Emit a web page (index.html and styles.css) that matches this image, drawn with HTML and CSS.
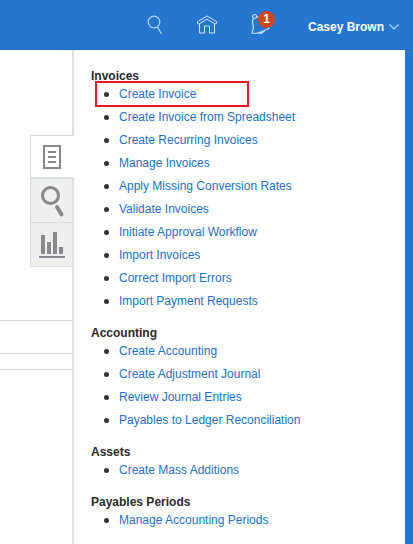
FILE: index.html
```html
<!DOCTYPE html>
<html lang="en">
<head>
<meta charset="utf-8">
<title>Invoices</title>
<link rel="stylesheet" href="styles.css">
</head>
<body>
<header class="topbar">
  <button class="icon-button" aria-label="Search">
    <svg width="22" height="22" viewBox="0 0 22 22" fill="none" stroke="#b9d8f5" stroke-width="1.200"><circle cx="11" cy="8" r="5.800"/><path d="M14.500 13l4 7"/></svg>
  </button>
  <a class="icon-button" href="#" aria-label="Home">
    <svg width="22" height="22" viewBox="0 0 22 22" fill="none" stroke="#d3e7fa"><path d="M1.500 9.500v-2L11 2l9.500 5.500v2l-1.500.5L11 5.200 3 10zM3.500 10v9h5v-7h5v7h5v-9"/></svg>
  </a>
  <button class="icon-button" aria-label="Notifications, 1 new">
    <svg width="22" height="22" viewBox="0 0 22 22" fill="none" stroke="#c4dff8" stroke-width="1.200"><circle cx="5.500" cy="2.500" r="2"/><path d="M7.500 2.500c3 2 6 0 7 3M4.500 4.500c-3 3 1 6-.5 11l-1 3.500 3 .5c5 0 8-3 14-5v-3M10 18.500l2 1 4-3z"/></svg>
    <span class="badge">1</span>
  </button>
  <button class="user-menu">Casey Brown
    <svg width="10" height="6" viewBox="0 0 10 6" fill="none" stroke="#b9d8f5" stroke-width="1.200"><path d="M.5.500L5 5 9.500.500"/></svg>
  </button>
</header>
<div class="workspace">
  <aside class="rail">
    <nav class="tabs" aria-label="Panels">
      <button class="tab active" aria-label="Tasks">
        <svg width="28" height="32" viewBox="0 0 28 32" fill="none" stroke="#858a8e" stroke-width="2"><path d="M6 6h16v22H6zM10 12h8M10 17h8M10 22h8"/></svg>
      </button>
      <button class="tab" aria-label="Search">
        <svg width="28" height="32" viewBox="0 0 28 32" fill="none" stroke="#858a8e" stroke-width="3"><circle cx="12.500" cy="12.500" r="8"/><path d="M19 24l4.500 7.500" stroke-width="4" stroke-linecap="round"/></svg>
      </button>
      <button class="tab" aria-label="Reports">
        <svg width="28" height="32" viewBox="0 0 28 32" fill="#858a8e"><path d="M3 8h4v19H3zM9 15h4v12H9zM15 5h4v22h-4zM21 20h4v7h-4zM1 29h26v2H1z"/></svg>
      </button>
    </nav>
    <div class="rule rule-large"></div>
    <div class="rule rule-medium"></div>
    <div class="rule rule-small"></div>
  </aside>
  <main class="tasks">
    <section>
      <h2>Invoices</h2>
      <ul>
        <li class="highlight"><a href="#">Create Invoice</a></li>
        <li><a href="#">Create Invoice from Spreadsheet</a></li>
        <li><a href="#">Create Recurring Invoices</a></li>
        <li><a href="#">Manage Invoices</a></li>
        <li><a href="#">Apply Missing Conversion Rates</a></li>
        <li><a href="#">Validate Invoices</a></li>
        <li><a href="#">Initiate Approval Workflow</a></li>
        <li><a href="#">Import Invoices</a></li>
        <li><a href="#">Correct Import Errors</a></li>
        <li><a href="#">Import Payment Requests</a></li>
      </ul>
    </section>
    <section>
      <h2>Accounting</h2>
      <ul>
        <li><a href="#">Create Accounting</a></li>
        <li><a href="#">Create Adjustment Journal</a></li>
        <li><a href="#">Review Journal Entries</a></li>
        <li><a href="#">Payables to Ledger Reconciliation</a></li>
      </ul>
    </section>
    <section>
      <h2>Assets</h2>
      <ul>
        <li><a href="#">Create Mass Additions</a></li>
      </ul>
    </section>
    <section>
      <h2>Payables Periods</h2>
      <ul>
        <li><a href="#">Manage Accounting Periods</a></li>
      </ul>
    </section>
  </main>
</div>
</body>
</html>
```
FILE: styles.css
```css
*, *::before, *::after { box-sizing: border-box; }
body {
  margin: 0;
  min-height: 100vh;
  display: flex;
  flex-direction: column;
  background: #2476ce;
  font-family: "Liberation Sans", Arial, sans-serif;
  font-size: 12px;
  color: #2b2b2b;
}
button {
  border: 0;
  padding: 0;
  background: none;
  font: inherit;
}
svg {
  display: block;
  overflow: visible;
}
.topbar {
  height: 50px;
  display: flex;
  align-items: center;
  justify-content: flex-end;
  gap: 31px;
  padding-right: 14px;
  border-bottom: 1px solid #216bbd;
}
.icon-button { position: relative; }
.badge {
  position: absolute;
  left: 9px;
  top: -3px;
  width: 17px;
  height: 17px;
  border-radius: 50%;
  background: #d14719;
  color: #fff;
  font-weight: bold;
  line-height: 17px;
  text-align: center;
}
.user-menu {
  display: flex;
  align-items: center;
  gap: 5px;
  margin-left: 6px;
  padding-top: 4px;
  color: #fff;
  font-weight: bold;
}
.workspace {
  flex: 1;
  display: flex;
  margin-right: 8px;
  background: #fff;
}
.rail {
  width: 74px;
  padding-top: 85px;
  border-right: 2px solid #dcdfe1;
}
.tabs {
  display: flex;
  flex-direction: column;
  margin-left: 30px;
}
.tab {
  display: flex;
  justify-content: center;
  height: 44px;
  padding-top: 4px;
  border: 1px solid #d5dde3;
  border-top: 0;
  border-right: 0;
  background: #efefef;
}
.tab.active {
  margin-right: -2px;
  padding-right: 1px;
  border-top: 1px solid #d5dde3;
  border-bottom: 2px solid #d5dde3;
  background: #fff;
}
.rule { border-bottom: 1px solid #ccd9e4; }
.rule-large { height: 54px; }
.rule-medium { height: 33px; }
.rule-small { height: 16px; }
.tasks {
  flex: 1;
  display: flex;
  flex-direction: column;
  gap: 11px;
  padding: 17px 16px 11px 17px;
}
h2 {
  margin: 0;
  font-size: 12px;
  line-height: 18px;
  height: 16px;
}
ul {
  margin: 0;
  padding: 0;
  list-style: none;
}
li {
  position: relative;
  display: flex;
  align-items: center;
  gap: 10px;
  height: 23px;
  padding-left: 13px;
}
li::before {
  content: "";
  width: 5px;
  height: 5px;
  border-radius: 50%;
  background: #333;
}
li a {
  padding-bottom: 2px;
  color: #2170c8;
  text-decoration: none;
}
.highlight::after {
  content: "";
  position: absolute;
  left: 4px;
  top: -2px;
  width: 154px;
  height: 26px;
  border: 2px solid #f01420;
}
```
